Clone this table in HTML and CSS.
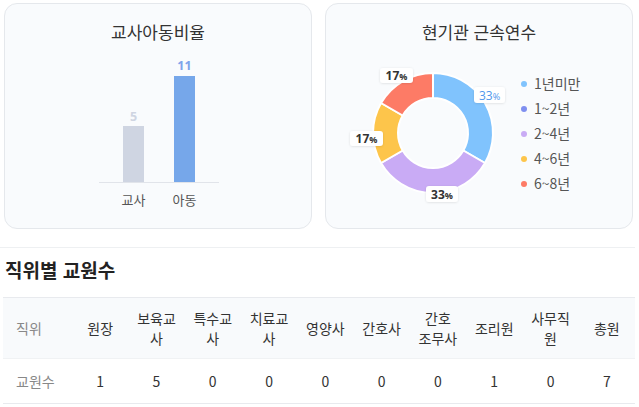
FILE: index.html
```html
<!DOCTYPE html>
<html lang="ko">
<head>
<meta charset="utf-8">
<link rel="stylesheet" href="styles.css">
</head>
<body>
<div class="charts">
  <div class="card">
    <div class="card-title">교사아동비율</div>
    <svg class="bar-chart" width="306" height="180" viewBox="0 0 306 180">
      <line x1="94" y1="138.5" x2="214" y2="138.5" stroke="#e1e4ea" stroke-width="1"/>
      <rect x="118" y="82" width="21" height="56" fill="#cfd5e2"/>
      <rect x="169" y="32" width="21" height="106" fill="#76a7ea"/>
      <text x="128.5" y="77" class="bar-val" fill="#cfd5e2">5</text>
      <text x="179.5" y="26" class="bar-val" fill="#7fa3eb">11</text>
      <text x="128.5" y="161" class="bar-axis">교사</text>
      <text x="179.5" y="161" class="bar-axis">아동</text>
    </svg>
  </div>
  <div class="card">
    <div class="card-title">현기관 근속연수</div>
    <div class="pie-area">
      <svg class="donut" width="190" height="180" viewBox="0 0 190 180">
        <defs>
          <filter id="sh" x="-30%" y="-30%" width="160%" height="160%">
            <feDropShadow dx="0" dy="0.5" stdDeviation="1" flood-color="#000" flood-opacity="0.12"/>
          </filter>
        </defs>
        <g stroke="#fff" stroke-width="2" stroke-linejoin="round">
          <path d="M107 29 A60 60 0 0 1 158.96 119 L137.31 106.5 A35 35 0 0 0 107 54 Z" fill="#80c3fd"/>
          <path d="M158.96 119 A60 60 0 0 1 55.04 119 L76.69 106.5 A35 35 0 0 0 137.31 106.5 Z" fill="#c9abf5"/>
          <path d="M55.04 119 A60 60 0 0 1 55.04 59 L76.69 71.5 A35 35 0 0 0 76.69 106.5 Z" fill="#fdc54b"/>
          <path d="M55.04 59 A60 60 0 0 1 107 29 L107 54 A35 35 0 0 0 76.69 71.5 Z" fill="#fd7b66"/>
        </g>
        <g class="lbl">
          <rect x="148" y="43" width="31" height="16" rx="3" fill="#fff" filter="url(#sh)"/>
          <text x="163.5" y="55.5" class="lbl-t blue">33<tspan class="pct">%</tspan></text>
          <rect x="54" y="24" width="33" height="15" rx="3" fill="#fff" filter="url(#sh)"/>
          <text x="70.5" y="36" class="lbl-t">17<tspan class="pct">%</tspan></text>
          <rect x="24" y="87" width="33" height="15" rx="3" fill="#fff" filter="url(#sh)"/>
          <text x="40.5" y="99" class="lbl-t">17<tspan class="pct">%</tspan></text>
          <rect x="100" y="142" width="32" height="16" rx="3" fill="#fff" filter="url(#sh)"/>
          <text x="116" y="154.5" class="lbl-t">33<tspan class="pct">%</tspan></text>
        </g>
      </svg>
      <ul class="legend">
        <li><span class="dot c1"></span>1년미만</li>
        <li><span class="dot c2"></span>1~2년</li>
        <li><span class="dot c3"></span>2~4년</li>
        <li><span class="dot c4"></span>4~6년</li>
        <li><span class="dot c5"></span>6~8년</li>
      </ul>
    </div>
  </div>
</div>
<div class="section">
  <h2 class="section-title">직위별 교원수</h2>
  <table class="staff">
    <colgroup>
      <col class="col-first">
      <col><col><col><col><col><col><col><col><col><col>
    </colgroup>
    <thead>
      <tr>
        <th class="first">직위</th>
        <th>원장</th>
        <th>보육교사</th>
        <th>특수교사</th>
        <th>치료교사</th>
        <th>영양사</th>
        <th>간호사</th>
        <th class="keep">간호 조무사</th>
        <th>조리원</th>
        <th>사무직원</th>
        <th>총원</th>
      </tr>
    </thead>
    <tbody>
      <tr>
        <td class="first">교원수</td>
        <td>1</td>
        <td>5</td>
        <td>0</td>
        <td>0</td>
        <td>0</td>
        <td>0</td>
        <td>0</td>
        <td>1</td>
        <td>0</td>
        <td>7</td>
      </tr>
    </tbody>
  </table>
</div>
</body>
</html>
```

FILE: styles.css
```css
* { box-sizing: border-box; }
body {
  margin: 0;
  font-family: "Noto Sans CJK KR", "Noto Sans", sans-serif;
  color: #333;
  background: #fff;
}
.charts {
  display: flex;
  gap: 13px;
  padding: 3px 0 0 4px;
}
.card {
  width: 308px;
  height: 226px;
  border: 1px solid #e5e8ec;
  border-radius: 13px;
  background: #f9fbfd;
}
.card-title {
  padding-top: 16px;
  height: 40px;
  font-size: 17px;
  line-height: 24px;
  text-align: center;
  color: #333;
}
.bar-chart, .donut { display: block; }
.bar-val {
  font-family: "Open Sans", "Noto Sans", sans-serif;
  font-size: 12.5px;
  font-weight: 700;
  text-anchor: middle;
}
.bar-axis {
  font-size: 13px;
  fill: #555;
  text-anchor: middle;
}
.pie-area {
  display: flex;
  align-items: flex-start;
}
.lbl-t {
  font-family: "Open Sans", "Noto Sans", sans-serif;
  font-size: 12px;
  font-weight: 700;
  fill: #333;
  text-anchor: middle;
}
.lbl-t.blue { fill: #4f97ec; font-weight: 400; }
.pct { font-size: 9px; }
.legend {
  list-style: none;
  margin: 27px 0 0 5px;
  padding: 0;
}
.legend li {
  display: flex;
  align-items: center;
  gap: 7px;
  font-size: 14px;
  line-height: 25px;
  color: #555;
}
.dot {
  width: 6px;
  height: 6px;
  border-radius: 50%;
}
.c1 { background: #80c3fd; }
.c2 { background: #7f8ff0; }
.c3 { background: #c9abf5; }
.c4 { background: #fdc54b; }
.c5 { background: #fd7b66; }
.section {
  margin-top: 18px;
  width: 635px;
  border-top: 1px solid #eef0f2;
}
.section-title {
  margin: 10px 0 0 5px;
  font-size: 19px;
  line-height: 24px;
  font-weight: 700;
  color: #222;
}
.staff {
  margin: 15px 0 0 3px;
  width: 632px;
  table-layout: fixed;
  border-collapse: collapse;
  font-size: 14px;
  line-height: 20px;
}
.col-first { width: 69px; }
.staff thead tr {
  background: #f8fafc;
  border-top: 1px solid #e8eaee;
  border-bottom: 1px solid #f0f2f4;
}
.staff th {
  font-weight: 400;
  color: #333;
  padding: 10px 6px;
  text-align: center;
  height: 60px;
}
.staff th.keep { word-break: keep-all; }
.staff td {
  padding: 12px 6px;
  text-align: center;
  color: #333;
}
.staff tbody tr { border-bottom: 1px solid #e8eaee; }
.staff .first {
  text-align: left;
  padding-left: 13px;
  color: #888;
}
```
